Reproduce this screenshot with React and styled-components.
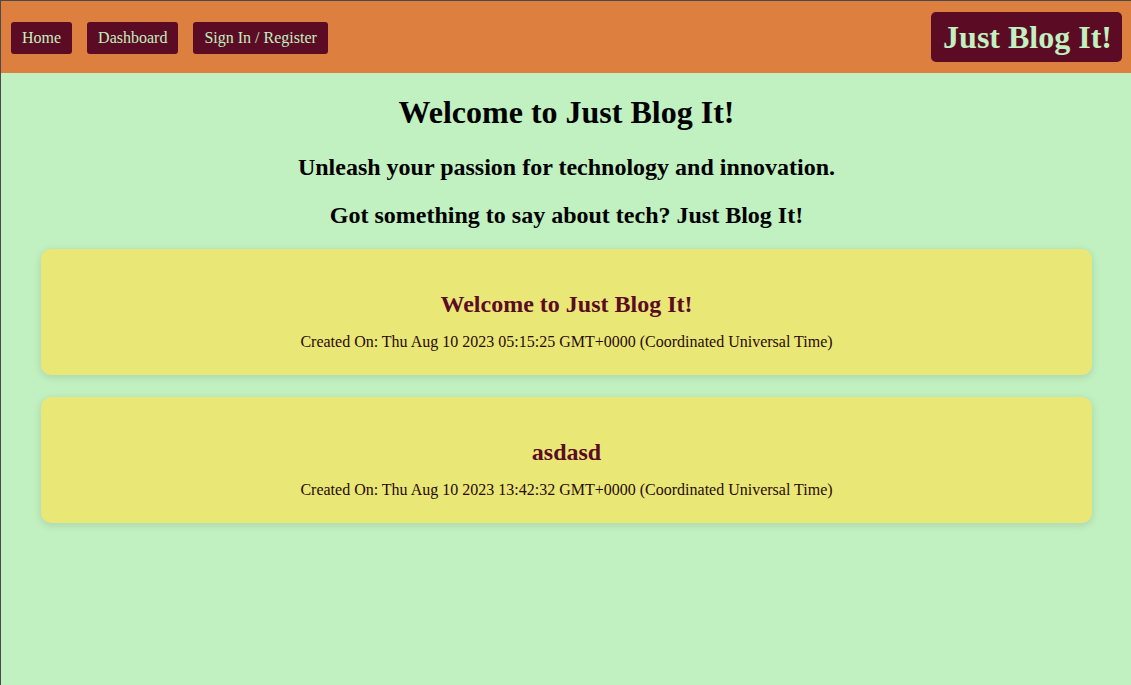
import styled, { createGlobalStyle } from 'styled-components'

const GlobalStyle = createGlobalStyle`
	html, body {
		margin: 0;
		padding: 0;
		background: #c1f0c1;
	}
	body {
		font-family: "Liberation Serif", "Times New Roman", serif;
	}
`

const posts = [
	{ id: 1, title: 'Welcome to Just Blog It!', created: 'Thu Aug 10 2023 05:15:25 GMT+0000 (Coordinated Universal Time)' },
	{ id: 2, title: 'asdasd', created: 'Thu Aug 10 2023 13:42:32 GMT+0000 (Coordinated Universal Time)' },
]

const App = () => {
	return (
		<>
			<GlobalStyle />
			<Page>
				<Header>
					<Nav>
						<NavButton>Home</NavButton>
						<NavButton>Dashboard</NavButton>
						<NavButton>Sign In / Register</NavButton>
					</Nav>
					<Brand>Just Blog It!</Brand>
				</Header>

				<Main>
					<Title>Welcome to Just Blog It!</Title>
					<Subtitle>Unleash your passion for technology and innovation.</Subtitle>
					<Subtitle>Got something to say about tech? Just Blog It!</Subtitle>

					<PostList>
						{posts.map(post => (
							<PostCard key={post.id}>
								<PostTitle>{post.title}</PostTitle>
								<PostDate>Created On: {post.created}</PostDate>
							</PostCard>
						))}
					</PostList>
				</Main>
			</Page>
		</>
	)
}

const Page = styled.div`
	min-height: 684px;
	border-top: 1px solid #4a4a4a;
	border-left: 1px solid #4a4a4a;
	background: #c1f0c1;
`

const Header = styled.header`
	height: 72px;
	background: #dc7f3f;
	display: flex;
	align-items: center;
	justify-content: space-between;
	padding: 0 9px 0 10px;
`

const Nav = styled.nav`
	display: flex;
	gap: 15px;
	margin-top: 1px;
`

const NavButton = styled.a`
	display: inline-flex;
	align-items: center;
	height: 32px;
	padding: 0 11px;
	background: #5c0b24;
	color: #c1f0c1;
	font-size: 16px;
	border-radius: 3px;
	cursor: pointer;
`

const Brand = styled.div`
	height: 50px;
	display: flex;
	align-items: center;
	padding: 0 10px 0 12px;
	background: #5c0b24;
	color: #c1f0c1;
	font-size: 32px;
	font-weight: 700;
	border-radius: 5px;
`

const Main = styled.main`
	text-align: center;
	padding: 0 39px 0 40px;
`

const Title = styled.h1`
	font-size: 32px;
	margin: 21px 0 22px;
`

const Subtitle = styled.h2`
	font-size: 24px;
	margin: 20px 0 0;
	line-height: 28px;
`

const PostList = styled.div`
	display: flex;
	flex-direction: column;
	gap: 22px;
	margin-top: 20px;
`

const PostCard = styled.article`
	background: #e9e776;
	border-radius: 10px;
	box-shadow: 0 2px 8px rgba(0, 0, 0, 0.12);
	padding: 41px 20px 24px;
`

const PostTitle = styled.h3`
	color: #5c0b24;
	font-size: 24px;
	line-height: 28px;
	margin: 0 0 15px;
`

const PostDate = styled.p`
	color: #2a0a0a;
	font-size: 16px;
	line-height: 18px;
	margin: 0;
`

export default App
